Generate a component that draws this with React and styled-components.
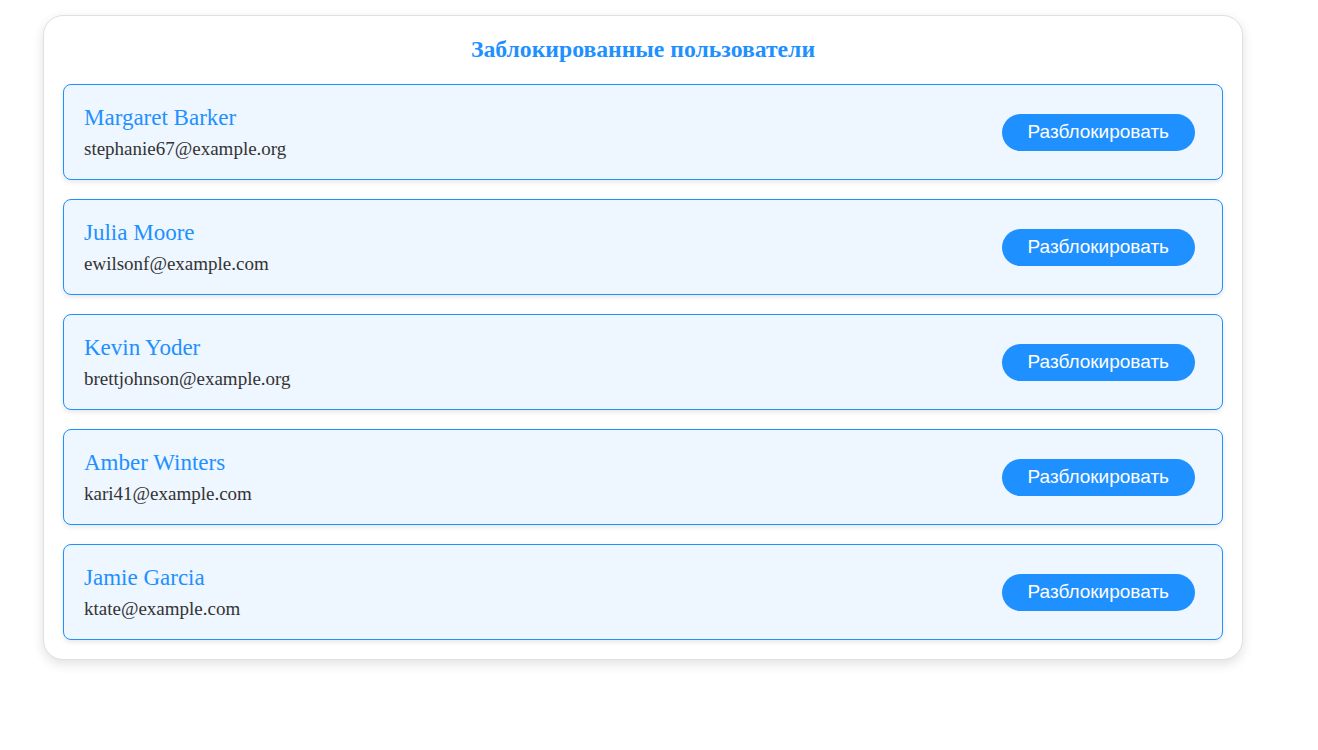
import React from "react";
import styled, { createGlobalStyle } from "styled-components";

const Global = createGlobalStyle`
  body {
    margin: 0;
    background: #ffffff;
    font-family: "Liberation Serif", "Times New Roman", serif;
  }
`;

const Page = styled.div`
  padding: 15px 0 40px 43px;
`;

const Panel = styled.section`
  width: 1200px;
  box-sizing: border-box;
  border: 1px solid #e0e0e0;
  border-radius: 20px;
  background: #fff;
  box-shadow: 0 4px 12px rgba(0, 0, 0, 0.12);
  padding: 17px 19px 19px;
`;

const Title = styled.h2`
  margin: 0 0 19px;
  text-align: center;
  color: #1e90ff;
  font-family: "Liberation Serif", "Times New Roman", serif;
  font-size: 23.7px;
  font-weight: bold;
  line-height: 32px;
`;

const List = styled.div`
  display: flex;
  flex-direction: column;
  gap: 19px;
`;

const Card = styled.div`
  display: flex;
  align-items: center;
  justify-content: space-between;
  height: 96px;
  box-sizing: border-box;
  padding: 0 27px 0 20px;
  border: 1px solid #1e90ff;
  border-radius: 8px;
  background: #eef6ff;
  box-shadow: 0 2px 5px rgba(0, 0, 0, 0.1);
`;

const Info = styled.div`
  display: flex;
  flex-direction: column;
  gap: 7px;
`;

const Name = styled.div`
  color: #1e90ff;
  font-size: 23px;
  line-height: 26px;
`;

const Email = styled.div`
  color: #333;
  font-size: 19px;
  line-height: 22px;
`;

const Button = styled.button`
  height: 37px;
  padding: 0 26px;
  border: none;
  border-radius: 19px;
  background: #1e90ff;
  color: #fff;
  font-family: "Liberation Sans", Arial, sans-serif;
  font-size: 19px;
  cursor: pointer;
`;

const users = [
  { name: "Margaret Barker", email: "stephanie67@example.org" },
  { name: "Julia Moore", email: "ewilsonf@example.com" },
  { name: "Kevin Yoder", email: "brettjohnson@example.org" },
  { name: "Amber Winters", email: "kari41@example.com" },
  { name: "Jamie Garcia", email: "ktate@example.com" },
];

export default function App() {
  return (
    <>
      <Global />
      <Page>
        <Panel>
          <Title>Заблокированные пользователи</Title>
          <List>
            {users.map((u) => (
              <Card key={u.email}>
                <Info>
                  <Name>{u.name}</Name>
                  <Email>{u.email}</Email>
                </Info>
                <Button>Разблокировать</Button>
              </Card>
            ))}
          </List>
        </Panel>
      </Page>
    </>
  );
}
